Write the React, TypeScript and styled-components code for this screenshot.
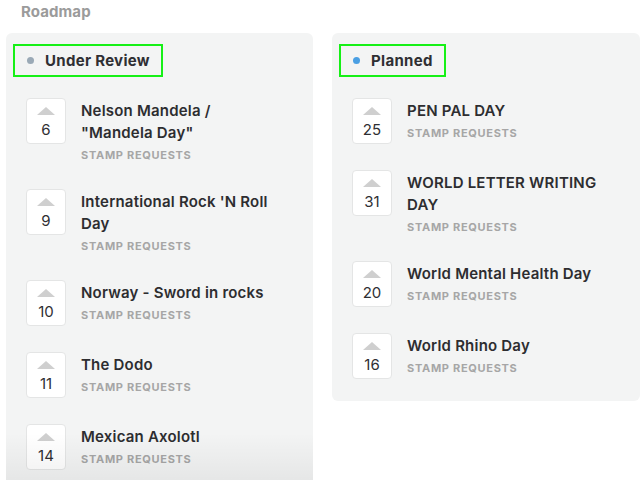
import React from "react";
import styled, { createGlobalStyle } from "styled-components";

const GlobalStyle = createGlobalStyle`
  html, body { margin: 0; padding: 0; background: #ffffff; overflow: hidden; }
  body { font-family: Inter, "Noto Sans", "Liberation Sans", sans-serif; color: #2f2f33; }
`;

const Page = styled.div`
  padding: 3px 0 0 6px;
  height: 480px;
  box-sizing: border-box;
`;

const PageTitle = styled.div`
  margin-left: 15px;
  font-size: 15px;
  font-weight: 700;
  letter-spacing: 0.1px;
  color: #9b9b9b;
  line-height: 18px;
  height: 30px;
`;

const Columns = styled.div`
  display: grid;
  grid-template-columns: 307px 308px;
  column-gap: 19px;
  align-items: start;
`;

const Panel = styled.section<{ $clip?: boolean }>`
  position: relative;
  background: #f3f4f4;
  border-radius: 6px;
  padding: 11px 7px 22px 7px;
  box-sizing: border-box;
  overflow: hidden;
  ${(p) => (p.$clip ? "height: 460px; border-bottom-left-radius: 0; border-bottom-right-radius: 0;" : "")}
`;

const Fade = styled.div`
  position: absolute;
  left: 0;
  right: 0;
  top: 400px;
  height: 47px;
  background: linear-gradient(to bottom, rgba(0, 0, 0, 0) 0%, rgba(0, 0, 0, 0.055) 100%);
  pointer-events: none;
`;

const Header = styled.div<{ $pad: number }>`
  display: inline-flex;
  align-items: center;
  gap: 11px;
  border: 2px solid #16f016;
  padding: 5px 11px 5px ${(p) => p.$pad}px;
  font-size: 15px;
  font-weight: 700;
  letter-spacing: 0.3px;
  line-height: 19px;
  color: #2f2f33;
  margin-bottom: 21px;
`;

const Dot = styled.span<{ $color: string }>`
  width: 7px;
  height: 7px;
  border-radius: 50%;
  background: ${(p) => p.$color};
`;

const List = styled.div`
  display: flex;
  flex-direction: column;
  gap: 26px;
  padding-left: 13px;
`;

const Item = styled.div`
  display: flex;
  align-items: flex-start;
  gap: 15px;
`;

const Vote = styled.div`
  flex: none;
  width: 40px;
  height: 46px;
  box-sizing: border-box;
  background: #ffffff;
  border: 1px solid #e4e5e5;
  border-radius: 4px;
  display: flex;
  flex-direction: column;
  align-items: center;
`;

const Arrow = styled.span`
  margin-top: 8px;
  width: 0;
  height: 0;
  border-left: 9px solid transparent;
  border-right: 9px solid transparent;
  border-bottom: 8px solid #cfcfcf;
`;

const Count = styled.span`
  font-size: 15px;
  line-height: 20px;
  color: #2f2f33;
  margin-top: 5px;
`;

const Body = styled.div`
  max-width: 198px;
  display: flex;
  flex-direction: column;
  padding-top: 2px;
`;

const Title = styled.div`
  font-size: 15px;
  font-weight: 600;
  letter-spacing: 0.2px;
  line-height: 22px;
  color: #2d2d30;
`;

const Category = styled.div`
  margin-top: 3px;
  font-size: 11px;
  font-weight: 700;
  line-height: 16px;
  letter-spacing: 0.7px;
  color: #a6a6a6;
  text-transform: uppercase;
`;

type Entry = { votes: number; title: string };

const review: Entry[] = [
  { votes: 6, title: 'Nelson Mandela / "Mandela Day"' },
  { votes: 9, title: "International Rock 'N Roll Day" },
  { votes: 10, title: "Norway - Sword in rocks" },
  { votes: 11, title: "The Dodo" },
  { votes: 14, title: "Mexican Axolotl" },
];

const planned: Entry[] = [
  { votes: 25, title: "PEN PAL DAY" },
  { votes: 31, title: "WORLD LETTER WRITING DAY" },
  { votes: 20, title: "World Mental Health Day" },
  { votes: 16, title: "World Rhino Day" },
];

const Entries = ({ items }: { items: Entry[] }) => (
  <List>
    {items.map((e) => (
      <Item key={e.title}>
        <Vote>
          <Arrow />
          <Count>{e.votes}</Count>
        </Vote>
        <Body>
          <Title>{e.title}</Title>
          <Category>Stamp Requests</Category>
        </Body>
      </Item>
    ))}
  </List>
);

export default function App() {
  return (
    <>
      <GlobalStyle />
      <Page>
        <PageTitle>Roadmap</PageTitle>
        <Columns>
          <Panel $clip>
            <Header $pad={12}>
              <Dot $color="#9aa9b6" />
              Under Review
            </Header>
            <Entries items={review} />
            <Fade />
          </Panel>
          <Panel>
            <Header $pad={12}>
              <Dot $color="#4a9fe3" />
              Planned
            </Header>
            <Entries items={planned} />
          </Panel>
        </Columns>
      </Page>
    </>
  );
}
